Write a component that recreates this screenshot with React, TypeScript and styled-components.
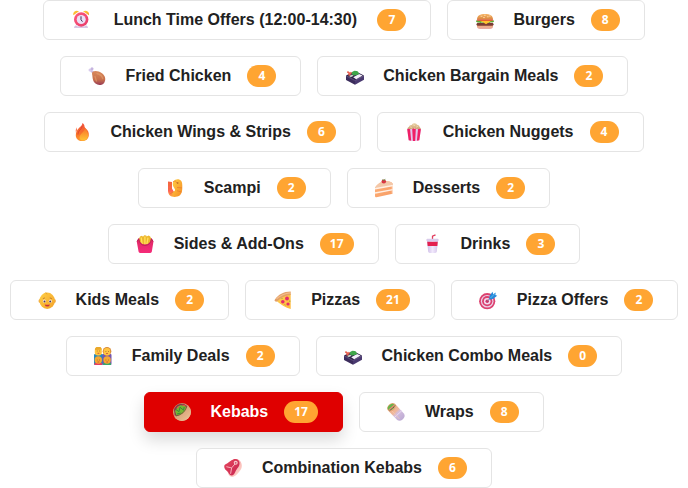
import React, { useState } from "react";
import styled, { createGlobalStyle } from "styled-components";

const GlobalStyle = createGlobalStyle`
  *, *::before, *::after { box-sizing: border-box; }
  body { margin: 0; background: #ffffff; }
`;

const CategoryNav = styled.nav`
  display: flex;
  flex-wrap: wrap;
  justify-content: center;
  gap: 16px;
  font-family: "Liberation Sans", Arial, sans-serif;
`;

const CategoryButton = styled.button<{ $active: boolean }>`
  display: inline-flex;
  align-items: center;
  gap: 16px;
  height: 40px;
  padding: 0 24px;
  border: 1px solid ${(p) => (p.$active ? "#df0000" : "#e4e4e4")};
  border-radius: 6px;
  background: ${(p) => (p.$active ? "#df0000" : "#ffffff")};
  color: ${(p) => (p.$active ? "#ffffff" : "#212121")};
  box-shadow: ${(p) => (p.$active ? "0 8px 16px rgba(0, 0, 0, 0.15)" : "none")};
  font-family: inherit;
  font-size: 16px;
  font-weight: 700;
  line-height: 24px;
  white-space: pre;
  cursor: pointer;
`;

const IconSlot = styled.span`
  display: flex;
  justify-content: center;
  width: 25px;
`;

const IconSvg = styled.svg`
  display: block;
  flex: none;
  width: 20px;
  height: 20px;
`;

const PaletteSvg = styled.svg`
  display: block;
  width: 0;
  height: 0;
`;

const CountBadge = styled.span`
  display: inline-flex;
  align-items: center;
  justify-content: center;
  min-width: 29px;
  height: 22px;
  padding: 0 10px;
  border-radius: 11px;
  background: #ffa532;
  color: #ffffff;
  font-family: "Open Sans", "Liberation Sans", sans-serif;
  font-size: 12px;
  line-height: 16px;
`;

type Stop = [string, string];

const gradients: { id: string; x2: number; y2: number; stops: Stop[] }[] = [
  { id: "bell", x2: 1, y2: 1, stops: [["0", "#ffd13b"], ["1", "#f59a25"]] },
  { id: "clock", x2: 1, y2: 1, stops: [["0", "#ff5a7d"], ["1", "#e63a69"]] },
  { id: "bun", x2: 0, y2: 1, stops: [["0", "#f6b567"], ["1", "#d9853f"]] },
  { id: "bunBase", x2: 0, y2: 1, stops: [["0", "#efab77"], ["1", "#e8a9a5"]] },
  { id: "drum", x2: 0, y2: 1, stops: [["0", "#d98a5c"], ["0.6", "#c8714c"], ["1", "#983c56"]] },
  { id: "fire", x2: 0, y2: 1, stops: [["0", "#f0503c"], ["0.6", "#f87329"], ["1", "#ff9a32"]] },
  { id: "flame", x2: 0, y2: 1, stops: [["0", "#f96f29"], ["1", "#ffc533"]] },
  { id: "corn", x2: 0, y2: 1, stops: [["0", "#e9d3a8"], ["1", "#c99a6b"]] },
  { id: "shrimp", x2: 1, y2: 1, stops: [["0", "#ffd044"], ["1", "#f58a24"]] },
  { id: "shrimpTail", x2: 0, y2: 1, stops: [["0", "#f4643e"], ["0.6", "#ff6255"], ["1", "#ffad3c"]] },
  { id: "cake", x2: 1, y2: 1, stops: [["0", "#ffb27a"], ["1", "#f69b63"]] },
  { id: "fryBox", x2: 0, y2: 1, stops: [["0", "#dc2764"], ["1", "#f52c79"]] },
  { id: "cup", x2: 1, y2: 0, stops: [["0", "#cdbbe6"], ["0.5", "#f1e9fc"], ["1", "#d4c4ea"]] },
  { id: "face", x2: 1, y2: 1, stops: [["0", "#ffd045"], ["1", "#f4a12a"]] },
  { id: "pizza", x2: 1, y2: 1, stops: [["0", "#ffcf54"], ["1", "#ffb93d"]] },
  { id: "pita", x2: 1, y2: 1, stops: [["0", "#c98c60"], ["1", "#efc59a"]] },
  { id: "wrap", x2: 1, y2: 1, stops: [["0", "#f0ac7d"], ["0.45", "#efb79c"], ["0.55", "#d4bede"], ["1", "#b7a6d1"]] },
  { id: "meat", x2: 1, y2: 1, stops: [["0", "#e6475e"], ["1", "#c62450"]] },
  { id: "fat", x2: 1, y2: 1, stops: [["0", "#f493a0"], ["1", "#ffdccd"]] },
];

const Palette = () => (
  <PaletteSvg aria-hidden="true">
    <defs>
      {gradients.map((g) => (
        <linearGradient key={g.id} id={g.id} x1="0" y1="0" x2={g.x2} y2={g.y2}>
          {g.stops.map(([offset, color]) => (
            <stop key={offset} offset={offset} stopColor={color} />
          ))}
        </linearGradient>
      ))}
    </defs>
  </PaletteSvg>
);

const clock = (
  <>
    <path d="M5 15l-1.500 3h3zM15 15l1.500 3h-3z" fill="#b79bc4" />
    <rect x="3" y="16.200" width="14" height="1.800" rx=".8" fill="#d9c6e4" />
    <path d="M2.400 5.300C1.400 1.700 4.800-.3 8 1.300z" fill="url(#bell)" />
    <path d="M17.900 5.300C18.900 1.700 15.200-.3 12 1.300z" fill="url(#bell)" />
    <circle cx="10.200" cy="9.500" r="7.200" fill="url(#clock)" />
    <circle cx="10.200" cy="9.500" r="4.500" fill="#eadff5" />
    <path d="M10 6.700v3l1.200 1.600" fill="none" stroke="#443052" strokeWidth="1" strokeLinecap="round" />
  </>
);

const burger = (
  <>
    <path d="M2 15h16v1.500q0 2.400-3 2.400H5q-3 0-3-2.400z" fill="url(#bunBase)" />
    <rect x="1.500" y="12.700" width="17" height="3" rx="1.500" fill="#7b3b35" />
    <path d="M1 10.400h18v1.200q-1.500 1.700-3 .5-1.500 1.500-3 .2-1.500 1.600-3 0-1.500 1.500-3 0-1.500 1.500-3 0-1.500.8-3-.7z" fill="#5fae35" />
    <path d="M2.500 10h15l-3.500 2.200-3 2-3-2z" fill="#ffc22e" />
    <rect x="1.800" y="9.200" width="16.400" height="1.500" rx=".7" fill="#df4037" />
    <path d="M2 9.400C2 5.800 5 4 10 4s8 1.800 8 5.400z" fill="url(#bun)" />
    <path d="M6 6.300h1M9.300 5.300h1M12.300 6.800h1M8.500 7.600h1M14.500 6h.8" stroke="#ffe3b0" strokeWidth=".8" strokeLinecap="round" />
  </>
);

const drumstick = (
  <>
    <path d="M4.600 5.300L7.500 7" stroke="#cdbfe3" strokeWidth="2.400" strokeLinecap="round" />
    <circle cx="3" cy="4" r="1.500" fill="#d8cbed" />
    <circle cx="5" cy="2.700" r="1.500" fill="#c5b4df" />
    <path d="M5.800 5.700C8 4.200 12 5 15 7.300c3.500 2.600 4 6.500 2.400 9.100-1.900 3-6.200 3.400-8.900 1.200C5.300 15 5.700 11.200 5.200 8.800c-.3-1.300-.2-2.500.6-3.100z" fill="url(#drum)" />
    <path d="M10 7.500c3 .8 5.200 2.600 5.700 5M8 10.500c.8 1.500.6 3 1.500 4.500" fill="none" stroke="#e5a26e" strokeWidth="1.400" strokeLinecap="round" opacity=".6" />
  </>
);

const bento = (
  <>
    <path d="M1 9.500l9 4.500v4.800l-9-4.900z" fill="#3b2c5c" />
    <path d="M10 14l9-4.500v4.300l-9 5z" fill="#4a3a70" />
    <path d="M1 9.500L10 5l9 4.500-9 4.800z" fill="#2c2148" />
    <path d="M8.200 11.200L14 8l3.600 1.600-6.400 3.700z" fill="#f4effb" />
    <path d="M4 9.900l3-1.300 1.700 1.200-2.900 1.500z" fill="#c7d0c4" />
    <path d="M2.300 5.800l1.700 1 .4 2.800M6.400 6.200L5 8.200" fill="none" stroke="#e8604f" strokeWidth="1.700" />
    <path d="M7 8q-.8-2.200 1.300-2.600Q9.400 4.200 11.200 5.100q2.200-.2 2.300 1.600 1.500 1.300-.7 2L9.600 9.400Q7.600 9.500 7 8z" fill="#3fa64a" />
    <path d="M1 10.100l9 4.600 9-4.600" fill="none" stroke="#6c568d" strokeWidth=".5" />
  </>
);

const fire = (
  <>
    <path d="M10.500 1c2.800 2 1.300 3.600 3 5.200 3 2.600 3.500 4.600 3.300 7.200-.3 3.500-3 5.700-6.600 5.700-3.800 0-6.300-2.300-6.400-5.700C3.700 10.300 5 8 7.200 5.800 8.700 4.300 10.300 3.300 10.500 1z" fill="url(#fire)" />
    <path d="M4.900 5.300q.9 2.600-1 5.500-.8-3 1-5.500z" fill="#fa7d5c" />
    <path d="M12.500 5.300c1.200 3.100-2.200 5-4.400 8.100-1.300 2-.4 4.500 2 5.200 3.400.2 6-2.100 6-5.100 0-2.700-1.300-5.700-3.600-8.200z" fill="url(#flame)" />
    <path d="M10.200 4.300c-.3 3-4.500 4.200-4.300 8.300" fill="none" stroke="#d93c35" strokeWidth=".8" />
  </>
);

const popcorn = (
  <>
    <path d="M3.500 8q-.7-2.400 1.500-3.200Q5.500 2.700 7.700 3 8.500.8 10.500 1.200q2-.2 2.600 1.600 2.500.2 2.700 2.400 1.800 1 .7 3z" fill="url(#corn)" />
    <path d="M6.500 5l1 .7M9.500 3l1 .5M12.500 5l1-.4M10 6.200l1 .4" stroke="#fff0cb" strokeWidth="1" />
    <path d="M3.200 7.200q1.700-1 3.400 0 1.700-1 3.400 0 1.700-1 3.400 0 1.700-1 3.500 0l-1.600 11.100q-5.300 1.300-10.600 0z" fill="#e2c6ed" />
    <path d="M3.200 7.200q1.500-1 2.900 0l1.100 11.500-2.500-.4zM8.200 7q1.800-1 3.600 0l-.6 12H8.900zM14 7.200q1.500-1 2.900 0l-1.600 11.100-2.400.4z" fill="#f01f66" />
  </>
);

const shrimp = (
  <>
    <path d="M3 3.500l4 .4v6.700l2.500 4.300 1 4C5.500 19.200 3 16.500 3 12.500z" fill="url(#shrimpTail)" />
    <path d="M8.500 3.300C10.300.7 14.500.6 16.300 3c1 1.500 1 3.500 1 6.500 0 5.500-1.500 9-6.600 9.300-2 .1-3.700-1.200-3.500-3 .2-1.900 2.100-2 2.700-3.200.5-1.300-.1-1.700-1-3.200-1.400-1.800-1.500-4.200-.4-6.100z" fill="url(#shrimp)" />
    <path d="M8 3.900Q11 1.800 11.700 5.200M12 9.500l5 .4M12 12.700l4.500 1.300M3 7l4 .2M3.300 11l3.700-.5M4.800 16l3.700-2.200" fill="none" stroke="#e7782d" strokeWidth=".7" />
    <circle cx="12.700" cy="5" r=".8" fill="#a95a20" />
  </>
);

const cake = (
  <>
    <path d="M1 9.600Q5 3.700 11 3.200q8-.4 8 3.800v7.500q0 1-1.500 1.500L2.500 19.200Q1 19.500 1 18z" fill="url(#cake)" />
    <path d="M1 9.600Q5 3.700 11 3.200q8-.4 8 3.800L1 10.800z" fill="#f3c7a8" />
    <path d="M1 10.800l18-3.300" stroke="#fff0e5" strokeWidth="1.400" />
    <path d="M1 15l18-3.300" stroke="#fff0e5" strokeWidth="1.300" />
    <path d="M18.300 7.500v7.900" stroke="#ffe7d6" strokeWidth="1" />
    <ellipse cx="9.800" cy="3.500" rx="2.300" ry="1.900" fill="#d93643" />
    <path d="M8.500 1.700l1.300.7 1.500-1" stroke="#589447" fill="none" />
  </>
);

const fries = (
  <>
    <path d="M3 7L5 2.500l2-.7 1 1 1.200-1.500 2 .3.500 1 2-1 1.500 1 1.800 4-2.500 4-5 1-4.500-1z" fill="#edb62c" />
    <path d="M6.200 3.500l1 7M9.900 2.500V11M13 3.700l-1.200 7" stroke="#ffe15c" strokeWidth="1.300" />
    <path d="M1.700 7.300l2-3.400Q4.500 10.300 10 10.500 15.800 10.300 16.300 3.900l2.200 3.400-1.700 10.500q-.2 1.100-1.500 1.100H5q-1.200 0-1.400-1.100z" fill="url(#fryBox)" />
    <path d="M2.200 7.300l1.600-2.600Q4.600 11.300 10 11.400 15.500 11.300 16.400 4.700l1.600 2.600" fill="none" stroke="#b51e55" strokeWidth=".9" />
  </>
);

const drink = (
  <>
    <path d="M10.500 5.700V2.200l3-1.300" fill="none" stroke="#e23c5d" strokeWidth="1.300" />
    <path d="M5 6.200h11l-1.200 11.600q-.2 1.100-1.500 1.100H7.700q-1.300 0-1.500-1.100z" fill="url(#cup)" />
    <path d="M5.200 7.700h10.600l-.5 4.200H5.700z" fill="#e4204f" />
    <rect x="4.400" y="4.700" width="12.200" height="2.600" rx="1" fill="#d9caea" />
  </>
);

const kid = (
  <>
    <circle cx="3.400" cy="11" r="1.900" fill="#efa63d" />
    <circle cx="17" cy="11" r="1.900" fill="#efa63d" />
    <ellipse cx="10.200" cy="10.700" rx="7.700" ry="8.200" fill="url(#face)" />
    <path d="M10.300 4q-1.800-.4-1.500-1.600" fill="none" stroke="#e9a12c" strokeWidth="1" />
    <ellipse cx="7.400" cy="11.200" rx="1.500" ry="1.600" fill="#f9efe5" />
    <ellipse cx="13.300" cy="11.200" rx="1.500" ry="1.600" fill="#f9efe5" />
    <circle cx="7.500" cy="11.400" r="1" fill="#573a54" />
    <circle cx="13.200" cy="11.400" r="1" fill="#573a54" />
    <path d="M5.900 8.600l2-.7M12.800 7.900l2 .7" stroke="#a3672b" strokeWidth=".7" />
    <path d="M7.700 14.400q2.600.8 5.200 0-.5 2.200-2.600 2.200t-2.600-2.200z" fill="#c9313c" />
  </>
);

const pizza = (
  <>
    <path d="M3 10.500Q9 4.500 17.700 4v15q-7.500-2-14.700-8.500z" fill="url(#pizza)" />
    <path d="M1.900 9.500C5.200 4.700 10.600 1.500 17.700 1.500v3.400Q10.400 5.300 4.600 11q-1.400 1.200-2.700.1-.8-.6 0-1.600z" fill="#e3a067" />
    <path d="M3.500 8.800Q9.300 3.600 17.300 2.900" fill="none" stroke="#f3bd8a" strokeWidth="1.300" />
    <circle cx="14" cy="8.500" r="1.900" fill="#e52b6b" />
    <circle cx="9.800" cy="11.800" r="1.800" fill="#e52b6b" />
    <circle cx="15" cy="14" r="1.600" fill="#e52b6b" />
    <path d="M8.500 9l1-1M12.500 15l-1-.6M16.800 10.500v1.500" stroke="#83a13f" strokeWidth=".8" />
  </>
);

const dart = (
  <>
    <circle cx="9.200" cy="11.200" r="8.100" fill="#dc416f" />
    <circle cx="9.200" cy="11.200" r="6.300" fill="#ead2e8" />
    <circle cx="9.200" cy="11.200" r="5.100" fill="#dc416f" />
    <circle cx="9.200" cy="11.200" r="3.300" fill="#f2dcef" />
    <circle cx="9.200" cy="11.200" r="1.700" fill="#cc3567" />
    <path d="M9.200 11.200l6-6" stroke="#8c7a9b" strokeWidth="1" />
    <path d="M11.500 6l3-4.300.8 2.600 2.300-1.800-.2 2.500 1.800.7-3.900 3-4 1z" fill="#2789d9" />
    <path d="M12.500 8l5-5" stroke="#66c3f1" strokeWidth=".8" />
  </>
);

const family = (
  <>
    <rect x="1" y="8" width="9" height="11" rx="1" fill="#2789be" />
    <rect x="9.500" y="8" width="9" height="11" rx="1" fill="#7656ac" />
    <circle cx="14" cy="5.300" r="4.300" fill="#d88a38" />
    <rect x="1.800" y="1" width="7" height="8.500" rx="3" fill="#ffc43e" />
    <rect x="10.700" y="2" width="6.500" height="7.500" rx="3" fill="#ffc43e" />
    <path d="M2 4V2.800L3.500 1h4L9 3.500z" fill="#e9a82c" />
    <path d="M1.500 17h7.700v2H1.500z" fill="#e63d61" />
    <path d="M10.300 17H18v2h-7.700z" fill="#38a869" />
    <circle cx="5.300" cy="14" r="3.700" fill="#f6a831" />
    <circle cx="14.100" cy="14" r="3.700" fill="#f6a831" />
    <path d="M3.800 5h.8M6.300 5h.8M12.500 5.500h.8M15 5.500h.8M3.800 14h.8M6.200 14h.8M12.500 14h.8M15 14h.8" stroke="#8b5a37" strokeWidth=".8" />
    <path d="M4.500 7.300h1.800M13.100 7.500h1.800M4.500 16h1.700M13.300 16H15" stroke="#c53f3f" strokeWidth=".8" />
  </>
);

const kebab = (
  <>
    <circle cx="10" cy="10" r="9" fill="url(#pita)" />
    <path d="M2 7.800C3.500 3 8 .9 12.500 2.300l3 2-3.400 7-5.600 3.300-3.800-1.100z" fill="#833849" />
    <path d="M3 9l2.500-4L8.200 3.300l3.500.2 3.200 1.800-2.100 4.700-4 3.300-4.300.5z" fill="#74b532" />
    <path d="M4 7.600l3 2.100L8 5.200l3.500 3 .7-3.200M5 12l3.700-1" fill="none" stroke="#368b3c" strokeWidth="1" />
    <path d="M5 6l1.700-1.700M10.500 3l3 1" stroke="#df5946" strokeWidth="1.100" />
    <path d="M15.100 3.500C13.700 10 9.300 13.800 2 14.500c2.500 4 7.500 5.500 11.800 3.600 5-2.300 6.700-8.900 2.800-13.300z" fill="url(#pita)" />
    <path d="M14.900 4.500Q12.700 12 4 14" fill="none" stroke="#74433a" strokeWidth=".7" />
  </>
);

const wrap = (
  <>
    <path d="M2 8.500l7.400-6.200 8.700 9.500q1.600 3-1.500 5.700-3 2.200-5.400.4z" fill="url(#wrap)" />
    <ellipse cx="5.500" cy="5.200" rx="4.800" ry="3.600" transform="rotate(-40 5.500 5.200)" fill="#e6a77a" />
    <ellipse cx="5.200" cy="5" rx="3.900" ry="2.500" transform="rotate(-40 5.200 5)" fill="#69b44b" />
    <path d="M3.300 7.700l5-4.500" stroke="#ef8a72" strokeWidth="1.500" />
    <path d="M3.600 8.700l5.700-5" stroke="#623d42" strokeWidth=".9" strokeDasharray="1.500 .8" />
    <path d="M9 15l7-6.500" stroke="#e9d9f3" strokeWidth="1" />
    <path d="M6 9l7.500 8" stroke="#f9ceb2" strokeWidth="1" opacity=".6" />
  </>
);

const meat = (
  <>
    <path d="M2.500 8.200Q1.200 11 4.500 13.500c.8 3.600 3 6 5.800 5.300C13 18 15.200 15 17.500 12 20 8.400 18.800 3.500 15.600 1.700c-3.300-1.800-8.200.3-13.100 6.500z" fill="url(#fat)" />
    <path d="M2.100 6.500C5.700 5 7.400 2.600 10.200 1.500c3-1.300 6 0 6.300 3.300.3 3.600-2.300 5.300-3.800 8.300-.9 2-2 4.600-3.900 4.500C6 17.300 5.900 14 3.500 12.500.9 10.800.7 7.500 2.100 6.500z" fill="url(#meat)" />
    <path d="M3.400 8.700l5.200 1.200 3.600-4.200M8.600 9.900l-1 5.900" fill="none" stroke="#f9b2bd" strokeWidth="1" />
    <circle cx="12.700" cy="4.800" r="2" fill="#fac9cb" />
    <circle cx="12.700" cy="4.800" r=".9" fill="#c85770" />
  </>
);

const categories = [
  { label: " Lunch Time Offers (12:00-14:30) ", count: 7, icon: clock },
  { label: "Burgers", count: 8, icon: burger },
  { label: "Fried Chicken", count: 4, icon: drumstick },
  { label: "Chicken Bargain Meals", count: 2, icon: bento },
  { label: "Chicken Wings & Strips", count: 6, icon: fire },
  { label: "Chicken Nuggets", count: 4, icon: popcorn },
  { label: "Scampi", count: 2, icon: shrimp },
  { label: "Desserts", count: 2, icon: cake },
  { label: "Sides & Add-Ons", count: 17, icon: fries },
  { label: "Drinks", count: 3, icon: drink },
  { label: "Kids Meals", count: 2, icon: kid },
  { label: "Pizzas", count: 21, icon: pizza },
  { label: "Pizza Offers", count: 2, icon: dart },
  { label: "Family Deals", count: 2, icon: family },
  { label: "Chicken Combo Meals", count: 0, icon: bento },
  { label: "Kebabs", count: 17, icon: kebab },
  { label: "Wraps", count: 8, icon: wrap },
  { label: "Combination Kebabs", count: 6, icon: meat },
];

export default function App() {
  const [selected, setSelected] = useState("Kebabs");
  return (
    <>
      <GlobalStyle />
      <Palette />
      <CategoryNav aria-label="Menu categories">
        {categories.map(({ label, count, icon }) => (
          <CategoryButton
            key={label}
            type="button"
            $active={label === selected}
            aria-pressed={label === selected}
            onClick={() => setSelected(label)}
          >
            <IconSlot>
              <IconSvg viewBox="0 0 20 20" aria-hidden="true">{icon}</IconSvg>
            </IconSlot>
            <span>{label}</span>
            <CountBadge>{count}</CountBadge>
          </CategoryButton>
        ))}
      </CategoryNav>
    </>
  );
}
